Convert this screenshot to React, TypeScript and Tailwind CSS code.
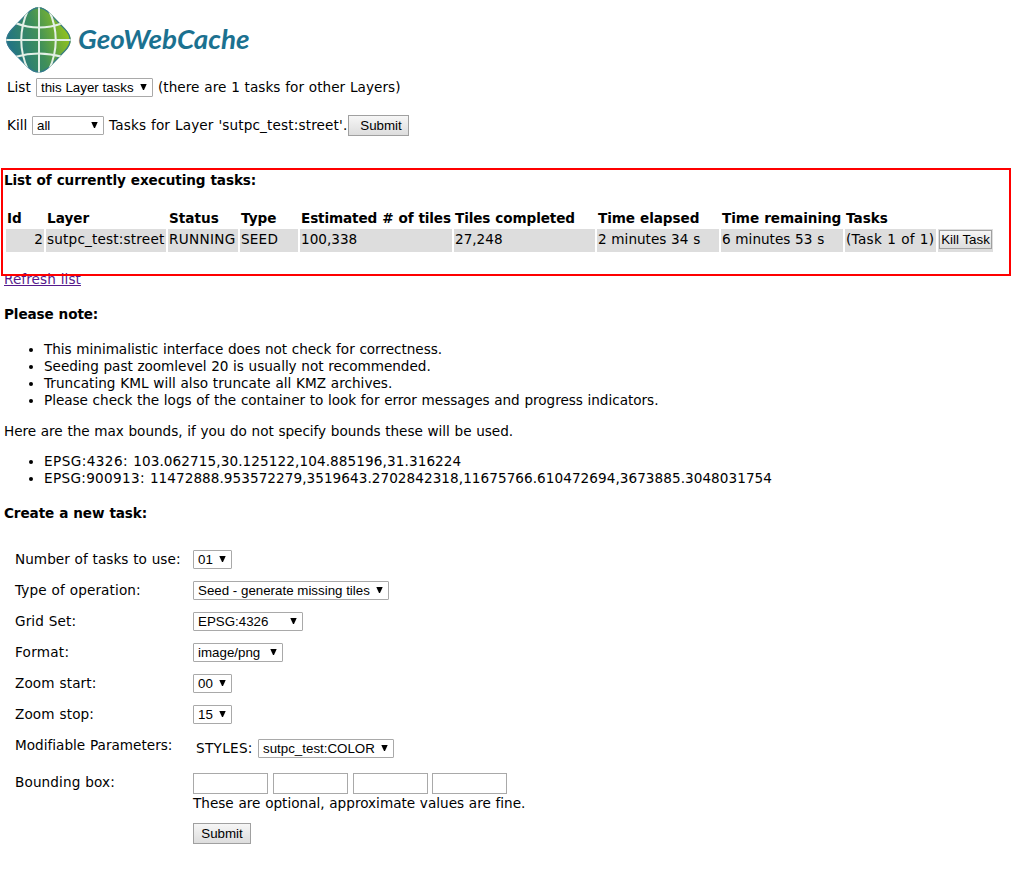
import React from "react";

const gem = "M23 8Q34.500 -3.500 46 8L61 23.500Q72.500 35 61 46.500L46 62Q34.500 73 23 62L8 46.500Q-3.500 35 8 23.500Z";

function Logo() {
  return (
    <svg width="270" height="70" viewBox="0 0 270 70" className="block" aria-label="GeoWebCache">
      <defs>
        <linearGradient id="globe" x1="0.05" y1="0.7" x2="0.98" y2="0.4">
          <stop offset="0" stopColor="#1f7286" />
          <stop offset="0.5" stopColor="#3f8f5a" />
          <stop offset="1" stopColor="#94c41c" />
        </linearGradient>
        <clipPath id="shape">
          <path d={gem} />
        </clipPath>
      </defs>
      <path d={gem} fill="url(#globe)" />
      <g clipPath="url(#shape)" fill="none">
        <path d={gem} stroke="#34788f" strokeWidth="2.400" />
        <path d="M35 2V68M2 35H67" stroke="#e3efe6" strokeWidth="2" />
        <path d="M24 5Q10.500 35 24 65M45 5Q58.500 35 45 65" stroke="#e3efe6" strokeWidth="2" />
        <path d="M12 18.300Q35 27 59 18M12 51.700Q35 45 59 52" stroke="#e3efe6" strokeWidth="2" />
      </g>
      <text x="74" y="44" textLength="171.500" lengthAdjust="spacingAndGlyphs" fill="#1b7190" className="font-['Lato','Open_Sans',sans-serif] text-[27px] font-bold italic [word-spacing:0]">
        GeoWebCache
      </text>
    </svg>
  );
}

function Select({ value, className }: { value: string; className: string }) {
  return (
    <span className={`relative inline-block h-[19px] shrink-0 ${className}`}>
      <select className="block h-full w-full appearance-none rounded-[1px] border border-[#a9a9a9] bg-white pl-1 font-['Liberation_Sans',Arial,sans-serif] text-[13.333px] leading-[17px] tracking-normal text-black [word-spacing:0]">
        <option>{value}</option>
      </select>
      <svg width="7" height="6" viewBox="0 0 7 6" className="pointer-events-none absolute top-[6px] right-[6px]">
        <path d="M0.300 0H6.700L4 6H3Z" fill="#000" />
      </svg>
    </span>
  );
}

function Button({ label, className }: { label: string; className: string }) {
  return (
    <button className={`block shrink-0 border border-[#a0a0a0] bg-linear-to-b from-[#f6f6f6] to-[#dddddd] text-center font-['Liberation_Sans',Arial,sans-serif] text-[13.333px] tracking-normal whitespace-nowrap text-black [word-spacing:0] ${className}`}>
      {label}
    </button>
  );
}

function Field({ label, children, className = "h-[31px]", tracking = "tracking-[0.12px]" }: { label: string; children: React.ReactNode; className?: string; tracking?: string }) {
  return (
    <div className={`flex items-start ${className}`}>
      <span className={`mt-px w-[178px] shrink-0 ${tracking}`}>{label}</span>
      {children}
    </div>
  );
}

const headers = [
  { text: "Id", tracking: "" },
  { text: "Layer", tracking: "" },
  { text: "Status", tracking: "" },
  { text: "Type", tracking: "" },
  { text: "Estimated # of tiles", tracking: "tracking-[-0.13px]" },
  { text: "Tiles completed", tracking: "tracking-[-0.12px]" },
  { text: "Time elapsed", tracking: "tracking-[-0.08px]" },
  { text: "Time remaining", tracking: "tracking-[-0.06px]" },
  { text: "Tasks", tracking: "" },
];
const values = [
  { text: "2", tracking: "" },
  { text: "sutpc_test:street", tracking: "tracking-[0.18px]" },
  { text: "RUNNING", tracking: "tracking-[0.3px]" },
  { text: "SEED", tracking: "tracking-[0.2px]" },
  { text: "100,338", tracking: "" },
  { text: "27,248", tracking: "" },
  { text: "2 minutes 34 s", tracking: "" },
  { text: "6 minutes 53 s", tracking: "" },
  { text: "(Task 1 of 1)", tracking: "tracking-[0.3px]" },
];
const columns = "grid grid-cols-[38px_120px_70px_58px_152px_141px_122px_122px_91px_55px] gap-x-[2px]";

export default function App() {
  return (
    <div className="h-[885px] w-[1011px] overflow-hidden bg-white pl-1 font-['DejaVu_Sans',Verdana,sans-serif] text-[13.6px] leading-[17px] whitespace-nowrap text-black [font-variant-ligatures:none] [word-spacing:0.4px]">
      <header className="h-[78px] pt-[5px]">
        <Logo />
      </header>
      <form className="flex h-[37px] items-start pl-[3px]">
        <span className="mt-px w-[29px]">List</span>
        <Select value="this Layer tasks" className="w-[117px]" />
        <span className="mt-px ml-[5px] tracking-[0.04px]">(there are 1 tasks for other Layers)</span>
      </form>
      <form className="flex h-[53px] items-start pl-[3px]">
        <span className="mt-[2px] w-[25px]">Kill</span>
        <Select value="all" className="mt-px w-[72px]" />
        <span className="mt-[2px] ml-[5px] w-[239px] tracking-[0.14px]">Tasks for Layer 'sutpc_test:street'.</span>
        <Button label="Submit" className="h-[21px] w-[61px] pl-[5px]" />
      </form>

      <section className="relative z-10 -ml-[3px] h-[108px] w-[1010px] border-2 border-[#ff0000] pt-[2px] pl-px">
        <h4 className="h-[38px] font-bold tracking-[-0.1px]">List of currently executing tasks:</h4>
        <div className={`ml-[2px] h-[19px] font-bold ${columns}`}>
          {headers.map((h) => (
            <span key={h.text} className={`pl-px ${h.tracking}`}>{h.text}</span>
          ))}
        </div>
        <div className={`ml-[2px] h-[23px] ${columns}`}>
          {values.map((v, i) => (
            <span key={v.text} className={`bg-[#dddddd] pt-[2px] ${i === 0 ? "pr-px text-right" : "pl-px"} ${v.tracking}`}>{v.text}</span>
          ))}
          <span className="bg-[#dddddd] p-px">
            <Button label="Kill Task" className="h-[19px] w-[53px]" />
          </span>
        </div>
      </section>
      <div className="-mt-[5px] h-[35px]">
        <a href="#" className="tracking-[0.08px] text-[#551a8b] underline">Refresh list</a>
      </div>

      <h4 className="h-[35px] font-bold tracking-[-0.12px]">Please note:</h4>
      <ul className="h-[82px] list-disc pl-10 tracking-[-0.03px]">
        <li>This minimalistic interface does not check for correctness.</li>
        <li>Seeding past zoomlevel 20 is usually not recommended.</li>
        <li className="tracking-[0.02px]">Truncating KML will also truncate all KMZ archives.</li>
        <li>Please check the logs of the container to look for error messages and progress indicators.</li>
      </ul>
      <p className="h-[30px] tracking-[-0.03px]">Here are the max bounds, if you do not specify bounds these will be used.</p>
      <ul className="h-[52px] list-disc pl-10">
        <li className="tracking-[0.095px]"><span className="tracking-[0.43px]">EPSG:4326: </span>103.062715,30.125122,104.885196,31.316224</li>
        <li className="tracking-[0.05px]"><span className="tracking-[0.32px]">EPSG:900913: </span>11472888.953572279,3519643.2702842318,11675766.610472694,3673885.3048031754</li>
      </ul>
      <h4 className="h-[45px] font-bold tracking-[-0.11px]">Create a new task:</h4>

      <form className="pl-[11px]">
        <Field label="Number of tasks to use:" tracking="tracking-[0.04px]"><Select value="01" className="w-[39px]" /></Field>
        <Field label="Type of operation:"><Select value="Seed - generate missing tiles" className="w-[196px]" /></Field>
        <Field label="Grid Set:"><Select value="EPSG:4326" className="w-[110px]" /></Field>
        <Field label="Format:" tracking="tracking-[0.25px]"><Select value="image/png" className="w-[90px]" /></Field>
        <Field label="Zoom start:"><Select value="00" className="w-[39px]" /></Field>
        <Field label="Zoom stop:"><Select value="15" className="w-[39px]" /></Field>
        <Field label="Modifiable Parameters:" className="h-[37px]" tracking="tracking-[0.01px]">
          <span className="mt-1 ml-[3px] w-[62px] tracking-[0.3px]">STYLES:</span>
          <Select value="sutpc_test:COLOR" className="mt-[3px] w-[136px]" />
        </Field>
        <Field label="Bounding box:" className="h-[50px]">
          <div>
            <div className="flex h-[22px] gap-[5px]">
              <input className="h-[21px] w-[75px] border border-[#a9a9a9]" />
              <input className="h-[21px] w-[75px] border border-[#a9a9a9]" />
              <input className="h-[21px] w-[75px] border border-[#a9a9a9]" />
              <input className="-ml-px h-[21px] w-[75px] border border-[#a9a9a9]" />
            </div>
            <div>These are optional, approximate values are fine.</div>
          </div>
        </Field>
        <Field label=""><Button label="Submit" className="h-[21px] w-[58px]" /></Field>
      </form>
    </div>
  );
}
